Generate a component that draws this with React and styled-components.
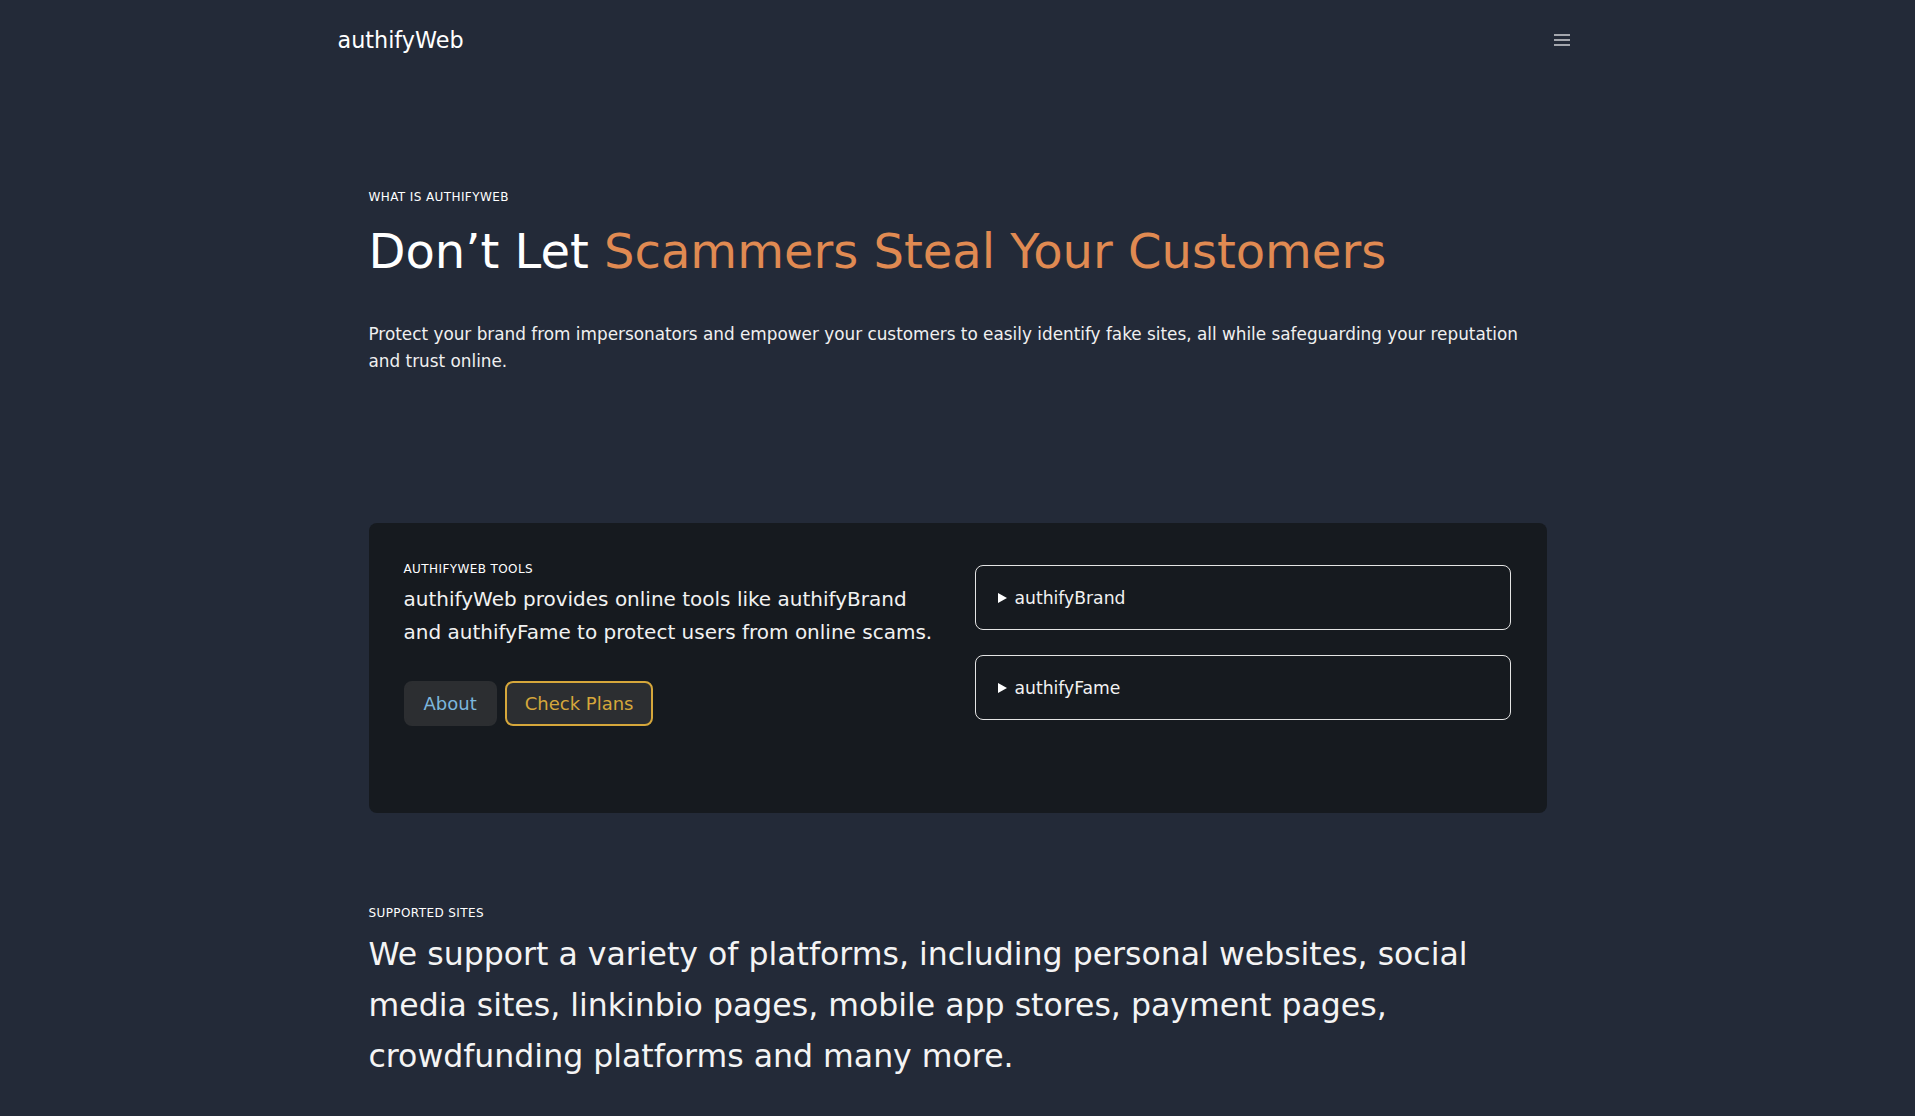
import React from 'react';
import styled, { createGlobalStyle } from 'styled-components';

const GlobalStyle = createGlobalStyle`
  * { box-sizing: border-box; }
  body {
    margin: 0;
    background-color: #232a38;
    color: #f2f2f2;
    font-family: "DejaVu Sans", "Noto Sans", sans-serif;
  }
`;

const Nav = styled.nav`
  max-width: 1240px;
  height: 80px;
  margin: 0 auto;
  display: flex;
  align-items: center;
  justify-content: space-between;
`;
const Logo = styled.a`
  font-size: 22.3px;
  color: #ffffff;
  text-decoration: none;
`;
const MenuButton = styled.button`
  width: 32px;
  height: 32px;
  padding: 0;
  border: 0;
  background: transparent;
  display: flex;
  flex-direction: column;
  align-items: center;
  justify-content: center;
  gap: 3px;
  cursor: pointer;
  span {
    display: block;
    width: 16px;
    height: 2px;
    background-color: #a3a6ad;
  }
`;

const Main = styled.main`
  max-width: 1178px;
  margin: 0 auto;
`;
const Hero = styled.section`
  padding-top: 111px;
`;
const Eyebrow = styled.div`
  font-size: 12px;
  line-height: 12px;
  text-transform: uppercase;
  color: #ffffff;
  letter-spacing: 0.4px;
`;
const Heading = styled.h1`
  margin: 19px 0 0;
  font-size: 48px;
  line-height: 58px;
  font-weight: 400;
  color: #ffffff;
  span { color: #e08a52; }
`;
const Lead = styled.p`
  margin: 41px 0 0;
  font-size: 16.85px;
  line-height: 27px;
  color: #f0f0f0;
`;

const Card = styled.section`
  margin-top: 148px;
  padding: 40px 35px 87px;
  background-color: #161a1f;
  border-radius: 8px;
  display: grid;
  grid-template-columns: 543px 536px;
  column-gap: 28px;
  align-items: start;
`;
const CardText = styled.p`
  margin: 8px 0 0;
  font-size: 20px;
  line-height: 33px;
  color: #f2f2f2;
`;
const Actions = styled.div`
  margin-top: 32px;
  display: flex;
  gap: 8px;
`;
const Button = styled.button`
  height: 45px;
  padding: 0 18px;
  border-radius: 8px;
  border: 2px solid ${(p) => (p.$outlined ? '#d6a73b' : '#2c2e31')};
  background-color: #2c2e31;
  color: ${(p) => (p.$outlined ? '#d6a73b' : '#7cb6dd')};
  font-family: inherit;
  font-size: 18px;
  cursor: pointer;
`;
const Tools = styled.div`
  padding-top: 2px;
  display: flex;
  flex-direction: column;
  gap: 25px;
`;
const Tool = styled.details`
  border: 1px solid #e4e4e4;
  border-radius: 8px;
  summary {
    height: 63px;
    padding: 0 22px;
    display: flex;
    align-items: center;
    gap: 8px;
    list-style: none;
    font-size: 17.2px;
    color: #f2f2f2;
    cursor: pointer;
  }
  summary::-webkit-details-marker { display: none; }
  summary::before {
    content: "";
    width: 0;
    height: 0;
    border-top: 5.5px solid transparent;
    border-bottom: 5.5px solid transparent;
    border-left: 9px solid #ffffff;
  }
`;

const Supported = styled.section`
  margin-top: 94px;
  padding-bottom: 40px;
`;
const BigText = styled.p`
  margin: 10px 0 0;
  font-size: 31.55px;
  line-height: 51px;
  color: #f4f4f4;
`;

const App = () => {
  return (
    <>
      <GlobalStyle />
      <Nav>
        <Logo href="#">authifyWeb</Logo>
        <MenuButton aria-label="menu">
          <span />
          <span />
          <span />
        </MenuButton>
      </Nav>
      <Main>
        <Hero>
          <Eyebrow>What is authifyWeb</Eyebrow>
          <Heading>
            Don’t Let <span>Scammers Steal Your Customers</span>
          </Heading>
          <Lead>
            Protect your brand from impersonators and empower your customers to easily identify fake
            sites, all while safeguarding your reputation and trust online.
          </Lead>
        </Hero>
        <Card>
          <div>
            <Eyebrow>authifyWeb tools</Eyebrow>
            <CardText>
              authifyWeb provides online tools like authifyBrand and authifyFame to protect users
              from online scams.
            </CardText>
            <Actions>
              <Button>About</Button>
              <Button $outlined>Check Plans</Button>
            </Actions>
          </div>
          <Tools>
            <Tool>
              <summary>authifyBrand</summary>
            </Tool>
            <Tool>
              <summary>authifyFame</summary>
            </Tool>
          </Tools>
        </Card>
        <Supported>
          <Eyebrow>Supported sites</Eyebrow>
          <BigText>
            We support a variety of platforms, including personal websites, social media sites,
            linkinbio pages, mobile app stores, payment pages, crowdfunding platforms and many more.
          </BigText>
        </Supported>
      </Main>
    </>
  );
};

export default App;
